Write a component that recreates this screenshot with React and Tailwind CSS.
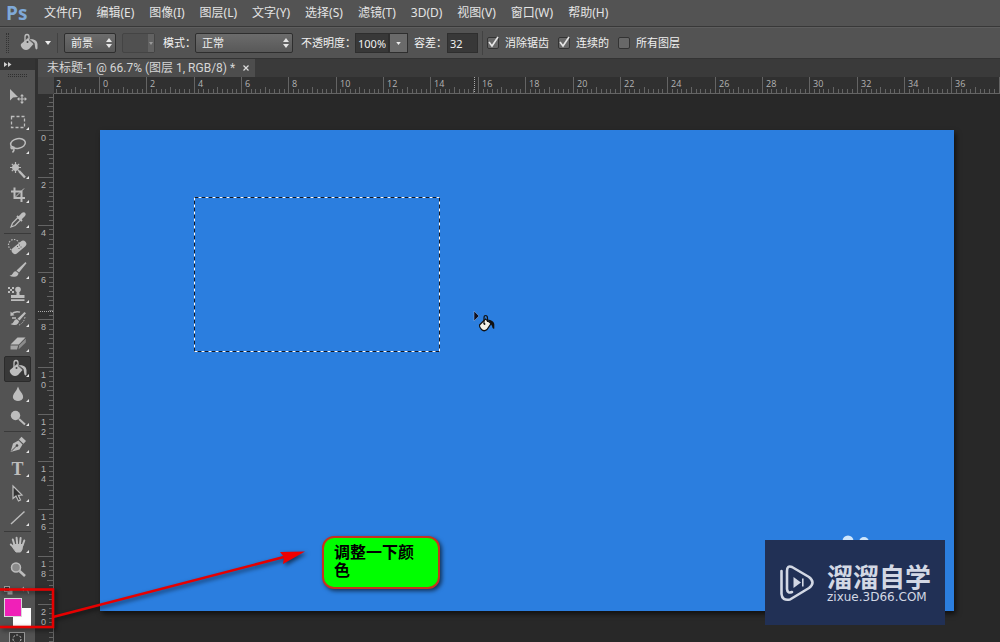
const UNIT = 47.35

const menus = [
  '文件(F)',
  '编辑(E)',
  '图像(I)',
  '图层(L)',
  '文字(Y)',
  '选择(S)',
  '滤镜(T)',
  '3D(D)',
  '视图(V)',
  '窗口(W)',
  '帮助(H)',
]

const Bucket = () => (
  <g>
    <path d="M4 13 L11 7 L17 12.5 L12 18 Q9 20 6 18 Q3 15 4 13Z" fill="currentColor" />
    <path d="M8 11 V6 Q8 3.5 10 3.5 Q12 3.5 12 6 V10" fill="none" stroke="currentColor" strokeWidth="1.3" />
    <path d="M12.5 8 Q20 8 20.5 13 V17.5 Q19 19.5 18.3 17 L17.5 12Z" fill="currentColor" />
    <path d="M12 8.5 L17 13" stroke="#555" />
    <circle cx="10.5" cy="11" r="1" fill="#444" />
  </g>
)

const groups = [
  {
    height: 'h-[147px]',
    tools: [
      {
        name: '移动工具',
        simple: true,
        icon: (
          <g>
            <path d="M4 4 V15.5 L7 12.5 L12 12Z" fill="currentColor" />
            <path d="M16 10 V18 M12 14 H20" stroke="currentColor" strokeWidth="1.2" />
            <path d="M16 9 L18 11.3 H14Z M16 19 L14 16.7 H18Z M11 14 L13.3 12 V16Z M21 14 L18.7 16 V12Z" fill="currentColor" />
          </g>
        ),
      },
      {
        name: '矩形选框工具',
        icon: <rect x="5.5" y="6.5" width="13" height="11" fill="none" stroke="currentColor" strokeWidth="1.3" strokeDasharray="3 2" />,
      },
      {
        name: '套索工具',
        icon: (
          <g fill="none" stroke="currentColor" strokeWidth="1.5">
            <ellipse cx="12" cy="9.5" rx="7.4" ry="4.8" transform="rotate(-10 12 9.5)" />
            <path d="M8 13.5 Q5 11.5 5 13.8 Q6 15.5 8 13.8 Q8.5 16.5 6.5 18.5" />
          </g>
        ),
      },
      {
        name: '魔棒工具',
        icon: (
          <g stroke="currentColor">
            <circle cx="9.5" cy="8.5" r="3" fill="currentColor" />
            <path d="M9.5 3 V14 M4 8.5 H15 M5.8 4.8 L13.2 12.2 M13.2 4.8 L5.8 12.2" strokeWidth="1.2" />
            <path d="M13 12 L19 18.5" strokeWidth="2.4" />
          </g>
        ),
      },
      {
        name: '裁剪工具',
        icon: (
          <g fill="none" stroke="currentColor" strokeWidth="2">
            <path d="M8.5 4.5 V15 H19" />
            <path d="M5 8.5 H15.5 V19" />
            <path d="M9 14.5 L18 5.5" strokeWidth="1" />
          </g>
        ),
      },
      {
        name: '吸管工具',
        icon: (
          <g>
            <path d="M5 19 L6.5 15 L12 9.5 L14.5 12 L9 17.5Z" fill="none" stroke="currentColor" strokeWidth="1.3" />
            <path d="M11 8 L16 13" stroke="currentColor" strokeWidth="1.8" />
            <path d="M12 9 L16 4.8 Q18.2 3.6 19.3 5 Q20.3 6.3 19 8 L15 12Z" fill="currentColor" />
          </g>
        ),
      },
    ],
  },
  {
    height: 'h-[195px]',
    tools: [
      {
        name: '污点修复画笔工具',
        icon: (
          <g>
            <circle cx="8" cy="10" r="5.5" fill="none" stroke="currentColor" strokeWidth="1.2" strokeDasharray="1.4 1.4" />
            <rect x="4.5" y="9" width="17" height="6.6" rx="3.3" fill="currentColor" transform="rotate(-40 13 12.3)" />
            <path d="M11 11.5 H12 M13 10 H14 M12.5 13.5 H13.5 M14.5 12 H15.5" stroke="#555" />
          </g>
        ),
      },
      {
        name: '画笔工具',
        icon: (
          <g fill="currentColor">
            <path d="M19.5 3 L20.5 4.2 L13 13.5 L10.5 11.5Z" />
            <path d="M10 12.2 L12.5 14.2 Q12 17.5 8.5 17.8 Q5.5 18 3.5 16.8 Q6 16.5 6.8 14.5 Q7.8 12 10 12.2Z" />
          </g>
        ),
      },
      {
        name: '仿制图章工具',
        icon: (
          <g fill="currentColor">
            <path d="M2 4h2v2H2z M6 4h2v2H6z M4 6h2v2H4z M2 8h2v2H2z M6 8h2v2H6z" />
            <circle cx="12" cy="6.5" r="2.8" />
            <path d="M10.8 8 H13.2 L13.6 12 H18.5 V15 H5 V12 H10.4Z M5 16.3 H18.5 V18 H5Z" />
          </g>
        ),
      },
      {
        name: '历史记录画笔工具',
        icon: (
          <g fill="currentColor">
            <path d="M18.5 5 L20 6.2 L13.5 13.5 L11.5 11.8Z" />
            <path d="M11 12.3 L13 14.2 Q12.5 17.5 9 18 Q6 18.2 4.5 17 Q7 16.5 7.8 14.5 Q8.8 12 11 12.3Z" />
            <path d="M5 7.5 Q9 3.5 14 5.2 M6 11 H10" fill="none" stroke="currentColor" strokeWidth="1.4" />
            <path d="M4.5 4.5 V9 L8.5 8.3Z" />
            <path d="M19 10 Q18 16 13 18" fill="none" stroke="currentColor" strokeDasharray="1.5 1.5" />
          </g>
        ),
      },
      {
        name: '橡皮擦工具',
        icon: (
          <g>
            <path d="M4.5 12.5 L11.5 5.5 H19.5 L12.8 12.5Z" fill="currentColor" />
            <path d="M4.5 13.5 H12.2 L11 17.5 H4.5Z" fill="#a5a5a5" />
            <path d="M13.2 13.2 L19.8 6.8 V10.5 L12.5 17.5Z" fill="#8c8c8c" />
          </g>
        ),
      },
      { name: '油漆桶工具', active: true, icon: <Bucket /> },
      {
        name: '模糊工具',
        icon: <path d="M12 4.5 Q13 8 16 11.5 Q18.5 15.5 15.5 18 Q12 20 8.5 18 Q5.5 15.5 8 11.5 Q11 8 12 4.5Z" fill="currentColor" />,
      },
      {
        name: '减淡工具',
        icon: (
          <g>
            <circle cx="9.5" cy="9.5" r="4.7" fill="currentColor" />
            <path d="M13 13 L19 18.5" stroke="currentColor" strokeWidth="2" />
          </g>
        ),
      },
    ],
  },
  {
    height: 'h-[97px]',
    tools: [
      {
        name: '钢笔工具',
        icon: (
          <g>
            <path d="M4.5 19 L7 10.5 L12.5 7.5 L16.5 11.5 L13.5 16.5Z" fill="currentColor" />
            <path d="M13 6.5 L15.5 3.8 L20 8 L17.5 10.8Z" fill="currentColor" />
            <path d="M5 18.5 L10.5 13" stroke="#484848" />
            <circle cx="11" cy="12.5" r="1.3" fill="#484848" />
          </g>
        ),
      },
      { name: '横排文字工具', letter: 'T' },
      {
        name: '路径选择工具',
        icon: <path d="M7 4 V16.5 L10 14 L12.5 19 L14.5 18 L12.3 13.3 L16 13Z" fill="#333" stroke="currentColor" strokeWidth="1.2" />,
      },
      { name: '直线工具', icon: <path d="M5 18 L18.5 5.5" stroke="currentColor" strokeWidth="1.4" /> },
    ],
  },
  {
    height: 'h-[49px]',
    tools: [
      {
        name: '抓手工具',
        icon: (
          <g stroke="currentColor" strokeLinecap="round">
            <path d="M8.5 12 L6.8 6.5 M11.2 11 L10.6 4.8 M14 11 L14.6 5 M16.5 12.5 L18.3 7.5 M8 14.5 L4.8 11.5" strokeWidth="2" />
            <path d="M8 11.5 H16.8 L16 16.5 L14.5 19 H10 L7 15Z" fill="currentColor" strokeWidth="1" />
          </g>
        ),
      },
      {
        name: '缩放工具',
        simple: true,
        icon: (
          <g>
            <circle cx="10" cy="9.5" r="4.5" fill="#8a8a8a" stroke="currentColor" strokeWidth="1.5" />
            <path d="M13.5 13 L19 18" stroke="currentColor" strokeWidth="2.6" />
          </g>
        ),
      },
    ],
  },
]

const Tool = ({ name, icon, letter, active, simple }) => (
  <button
    title={name}
    aria-label={name}
    className={
      active
        ? 'relative flex flex-1 min-h-0 items-center justify-center mx-1 rounded-xs border border-[#2b2b2b] bg-[#383838] text-[#bdbdbd]'
        : 'relative flex flex-1 min-h-0 items-center justify-center mx-1 text-[#bdbdbd]'
    }
  >
    {letter && (
      <span className="absolute inset-0 text-center font-['Liberation_Serif',serif] text-lg leading-6 font-bold">{letter}</span>
    )}
    <svg viewBox="0 0 24 24" className="size-6 shrink-0 overflow-visible">
      {icon}
      {!simple && <path d="M23 17 V20 H20Z" fill="#e8e8e8" />}
    </svg>
  </button>
)

const Toolbar = () => (
  <aside className="flex w-[38px] shrink-0 flex-col border-r-3 border-[#303030] bg-[#535353]">
    <div className="h-[11px] shrink-0 bg-[#343434] pl-1">
      <svg viewBox="0 0 8 11" className="h-[11px] w-2">
        <path d="M0 3 L3.5 5.5 L0 8Z M4 3 L7.5 5.5 L4 8Z" fill="#cfcfcf" />
      </svg>
    </div>
    <div className="mx-2 mt-1 mb-2 h-[3px] shrink-0 border-y border-dotted border-[#2f2f2f]" />
    {groups.map((group, i) => (
      <div key={i} className="shrink-0">
        {i > 0 && <div className="mx-1 my-px h-px bg-[#3a3a3a]" />}
        <div className={`flex flex-col ${group.height}`}>
          {group.tools.map((tool) => (
            <Tool key={tool.name} {...tool} />
          ))}
        </div>
      </div>
    ))}
    <div className="flex h-4 shrink-0 items-center justify-between px-1">
      <button aria-label="默认前景色和背景色">
        <svg viewBox="0 0 9 9" className="size-[9px]">
          <rect x="3.5" y="3.5" width="5" height="5" fill="#aaa" />
          <rect x=".5" y=".5" width="5" height="5" fill="#333" stroke="#999" />
        </svg>
      </button>
      <button aria-label="切换前景色和背景色">
        <svg viewBox="0 0 10 9" className="h-[9px] w-[10px]">
          <path d="M2 3 Q7 2.5 7.5 7.5" fill="none" stroke="#aaa" />
          <path d="M0 3 L3 .5 V5.5Z" fill="#aaa" />
        </svg>
      </button>
    </div>
    <div className="grid shrink-0 grid-cols-[9px_9px_9px] grid-rows-[10px_9px_9px] pl-1">
      <button aria-label="背景色" className="col-start-2 col-end-4 row-start-2 row-end-4 bg-white" />
      <button aria-label="前景色" className="col-start-1 col-end-3 row-start-1 row-end-3 border border-[#d8d8d8] bg-[#f020b8]" />
    </div>
    <button aria-label="以快速蒙版模式编辑" className="mt-1.5 ml-2 size-5 shrink-0 text-[#c9c9c9]">
      <svg viewBox="0 0 20 20" className="size-5">
        <rect x="1.5" y=".5" width="15" height="13" fill="#333" stroke="#999" />
        <circle cx="9" cy="7" r="4" fill="none" stroke="currentColor" strokeDasharray="2 1.5" />
      </svg>
    </button>
  </aside>
)

const Spinner = () => (
  <svg viewBox="0 0 6 10" className="pointer-events-none mr-1 h-[10px] w-[6px] self-center justify-self-end [grid-area:1/1]">
    <path d="M3 0 L6 4 H0Z M3 10 L0 6 H6Z" fill="#e6e6e6" />
  </svg>
)

const Select = ({ label, value, width }) => (
  <span className="grid">
    <select
      aria-label={label}
      defaultValue={value}
      className={`h-5 appearance-none rounded-xs border border-[#2e2e2e] bg-linear-to-b from-[#6c6c6c] to-[#585858] px-1.5 [grid-area:1/1] ${width}`}
    >
      <option>{value}</option>
    </select>
    <Spinner />
  </span>
)

const Check = ({ id, label, checked }) => (
  <div className="flex items-center gap-1.5">
    <span className="grid">
      <input
        id={id}
        type="checkbox"
        defaultChecked={checked}
        className="peer size-3 appearance-none rounded-xs border border-[#333] bg-[#686868] [grid-area:1/1]"
      />
      <svg viewBox="0 0 12 12" className="pointer-events-none hidden size-3 overflow-visible [grid-area:1/1] peer-checked:block">
        <path d="M2 5 L5 9 L11 0" fill="none" stroke="#e6e6e6" strokeWidth="1.6" />
      </svg>
    </span>
    <label htmlFor={id}>{label}</label>
  </div>
)

const OptionsBar = () => (
  <div className="flex h-8 shrink-0 items-center border-t border-[#5e5e5e] border-b border-b-[#333] bg-[#535353] pl-1.5 text-[11px] whitespace-nowrap text-[#f0f0f0]">
    <div className="h-5 w-[3px] border-x border-dotted border-[#333]" />
    <button aria-label="油漆桶工具预设" className="ml-2 flex items-center gap-1 text-[#bdbdbd]">
      <svg viewBox="0 0 24 24" className="size-6">
        <Bucket />
      </svg>
      <svg viewBox="0 0 6 4" className="h-1 w-1.5">
        <path d="M0 0 H6 L3 4Z" fill="#eee" />
      </svg>
    </button>
    <div className="mx-1.5 h-5 w-px bg-[#424242]" />
    <Select label="填充源" value="前景" width="w-[52px]" />
    <button disabled aria-label="图案" className="ml-1.5 flex h-5 w-[33px] justify-end rounded-xs border border-[#444] bg-[#505050]">
      <span className="flex w-1.5 items-center justify-center self-stretch bg-[#626262]">
        <svg viewBox="0 0 4 3" className="h-[3px] w-1">
          <path d="M0 0 H4 L2 3Z" fill="#999" />
        </svg>
      </span>
    </button>
    <label htmlFor="mode" className="ml-2 w-8">模式：</label>
    <Select label="模式" value="正常" width="w-[98px]" />
    <label htmlFor="opacity" className="ml-2 w-[54px]">不透明度：</label>
    <input id="opacity" defaultValue="100%" className="h-5 w-[34px] border border-[#2e2e2e] bg-[#383838] px-0.5" />
    <button aria-label="不透明度滑块" className="flex h-5 w-[19px] items-center justify-center border border-[#2e2e2e] bg-[#6a6a6a]">
      <svg viewBox="0 0 6 4" className="h-[3px] w-[5px]">
        <path d="M0 0 H6 L3 4Z" fill="#eee" />
      </svg>
    </button>
    <label htmlFor="tolerance" className="ml-1.5 w-[33px]">容差：</label>
    <input id="tolerance" defaultValue="32" className="h-5 w-[31px] border border-[#2e2e2e] bg-[#383838] px-0.5" />
    <div className="mx-1 h-6 w-px bg-[#424242]" />
    <div className="flex gap-[9px]">
      <Check id="antialias" label="消除锯齿" checked />
      <Check id="contiguous" label="连续的" checked />
      <Check id="all-layers" label="所有图层" />
    </div>
  </div>
)

const range = (from, to) => Array.from({ length: to - from + 1 }, (_, i) => from + i)

const tickSize = (n) => {
  if (n % 10 === 0) return 16
  return n % 5 === 0 ? 6 : 4
}

const HorizontalRuler = () => (
  <svg className="h-[17px] min-w-0 flex-1 bg-[#303030] font-['Open_Sans',sans-serif]" fontSize="9">
    {range(-9, 400).map((n) => {
      const x = Math.round(45 + (n * UNIT) / 10) + 0.5
      return <path key={n} d={`M${x} 16 V${16 - tickSize(n)}`} stroke="#646464" />
    })}
    {range(-1, 18).map((n) => (
      <text key={n} x={Math.round(49 + n * UNIT)} y="10" fill="#b4b4b4">
        {Math.abs(n * 2)}
      </text>
    ))}
    <path d="M420.5 0 V16" stroke="#aaa" strokeDasharray="1 1" />
    <path d="M0 16.5 H4000" stroke="#646464" />
  </svg>
)

const VerticalRuler = () => (
  <svg className="h-full w-4 shrink-0 bg-[#303030] font-['Liberation_Sans',sans-serif]" fontSize="9">
    {range(-7, 300).map((n) => {
      const y = Math.round(36 + (n * UNIT) / 10) + 0.5
      return <path key={n} d={`M15 ${y} H${15 - tickSize(n)}`} stroke="#646464" />
    })}
    {range(0, 10).map((n) =>
      String(n * 2).split('').map((digit, i) => (
        <text key={`${n}-${i}`} x="3" y={Math.round(47 + n * UNIT) + i * 10} fill="#b4b4b4">
          {digit}
        </text>
      )),
    )}
    <path d="M0 217.5 H15" stroke="#aaa" strokeDasharray="1 1" />
    <path d="M15.5 0 V4000" stroke="#646464" />
  </svg>
)

const Watermark = () => (
  <div className="absolute top-[410px] right-[9px] flex h-[85px] w-[180px] items-center gap-3 bg-[#213055] pl-3.5 text-[#d3d8e4]">
    <svg viewBox="0 0 36 38" className="h-[38px] w-9 shrink-0">
      <path
        d="M2.5 7 V30 Q3 37 11 35.5 L30 24 Q37 18.5 30 13 L13 3 Q8 1 8 7 V25 Q8.5 30 13 28"
        fill="none"
        stroke="currentColor"
        strokeWidth="2.6"
        strokeLinecap="round"
        strokeLinejoin="round"
      />
      <path d="M14.5 13 L22 18.5 L14.5 24Z" fill="currentColor" />
      <path d="M23.8 14.5 V22.5" stroke="currentColor" strokeWidth="1.6" />
    </svg>
    <div className="whitespace-nowrap">
      <p className="text-[26px] leading-7 font-bold">溜溜自学</p>
      <p className="font-['DejaVu_Sans',sans-serif] text-xs leading-3">zixue.3D66.COM</p>
    </div>
  </div>
)

const Canvas = () => (
  <div className="min-w-0 flex-1 bg-[#282828] pt-9 pr-[46px] pb-[31px] pl-[46px]">
    <div className="relative h-full bg-[#2b7edf] shadow-[2px_3px_5px_rgba(0,0,0,0.6)]">
      <svg className="absolute top-[67px] left-[94px] h-[155px] w-[246px]">
        <rect x="0.5" y="0.5" width="245" height="154" fill="none" stroke="#fff" />
        <rect x="0.5" y="0.5" width="245" height="154" fill="none" stroke="#101828" strokeDasharray="4 3" />
      </svg>
      <svg viewBox="0 0 24 24" className="absolute top-[180px] left-[372px] size-6">
        <path d="M2 1 V11 L7 6Z" fill="#101020" stroke="#8fb9ef" strokeWidth=".5" />
        <path d="M7.5 15 L13.5 9 L19 13.5 L15 19.5 Q12 22 9.5 19.5 Q7 17 7.5 15Z" fill="#f2efe6" stroke="#111" strokeWidth="1.2" />
        <path d="M12 14 V8 Q12 5.5 13.5 5.5 Q15.5 5.5 15.5 8 V12" fill="none" stroke="#111" strokeWidth="1.2" />
        <circle cx="12.5" cy="14" r=".9" fill="#111" />
        <path d="M15.5 9.5 Q21.5 10 22.3 14 V18.5 Q20.5 19.5 20 16 L18 12.5Z" fill="#111" />
      </svg>
      <p className="absolute top-[406px] left-[222px] h-[53px] w-[118px] rounded-xl border-2 border-[#c8321e] bg-[#00ff00] px-2.5 pt-[5px] text-base leading-[18px] font-bold text-black shadow-[2px_2px_4px_rgba(0,0,0,0.6)]">
        调整一下颜色
      </p>
      <svg viewBox="0 0 30 12" className="absolute top-[405px] right-[83px] h-3 w-[30px]">
        <circle cx="7" cy="6" r="5.5" fill="#cfe6fb" />
        <circle cx="23" cy="7" r="5" fill="#cfe6fb" />
      </svg>
      <Watermark />
    </div>
  </div>
)

const Annotation = () => (
  <svg className="pointer-events-none absolute top-[540px] left-0 h-[100px] w-[320px] drop-shadow-[2px_2px_2px_rgba(0,0,0,0.6)]">
    <rect x="-2" y="49.5" width="55" height="37.5" fill="none" stroke="#e60000" strokeWidth="2.6" />
    <path d="M53 77 L284 17" stroke="#e60000" strokeWidth="2.6" />
    <path d="M305 11.5 L280 12 L284 17 L283 24Z" fill="#f00000" />
  </svg>
)

export default function App() {
  return (
    <div className="relative flex h-screen flex-col overflow-hidden bg-[#282828] font-['Noto_Sans','Noto_Sans_CJK_SC',sans-serif] text-xs text-[#e4e4e4]">
      <header className="flex h-[27px] shrink-0 items-center border-b border-[#383838] bg-[#535353] pl-1.5">
        <span className="w-[38px] font-['Open_Sans',sans-serif] text-[19px] leading-6 font-bold text-[#7fa9d8]">Ps</span>
        <nav className="flex gap-[15px] whitespace-nowrap">
          {menus.map((menu) => (
            <button key={menu}>{menu}</button>
          ))}
        </nav>
      </header>
      <OptionsBar />
      <div className="flex min-h-0 flex-1">
        <Toolbar />
        <main className="flex min-w-0 flex-1 flex-col">
          <div className="flex h-[18px] shrink-0 bg-[#3a3a3a]">
            <div className="flex items-center gap-2 bg-[#4d4d4d] pr-1.5 pl-[9px] font-['Roboto','Noto_Sans_CJK_SC',sans-serif] whitespace-nowrap text-[#d6d6d6]">
              <span>未标题-1 @ 66.7% (图层 1, RGB/8) *</span>
              <button aria-label="关闭">
                <svg viewBox="0 0 6 6" className="size-1.5">
                  <path d="M.5 .5 L5.5 5.5 M5.5 .5 L.5 5.5" stroke="#ddd" strokeWidth="1.2" />
                </svg>
              </button>
            </div>
          </div>
          <div className="flex shrink-0">
            <div className="w-4 shrink-0 bg-[#484848]" />
            <HorizontalRuler />
          </div>
          <div className="flex min-h-0 flex-1">
            <VerticalRuler />
            <Canvas />
          </div>
        </main>
      </div>
      <Annotation />
    </div>
  )
}
